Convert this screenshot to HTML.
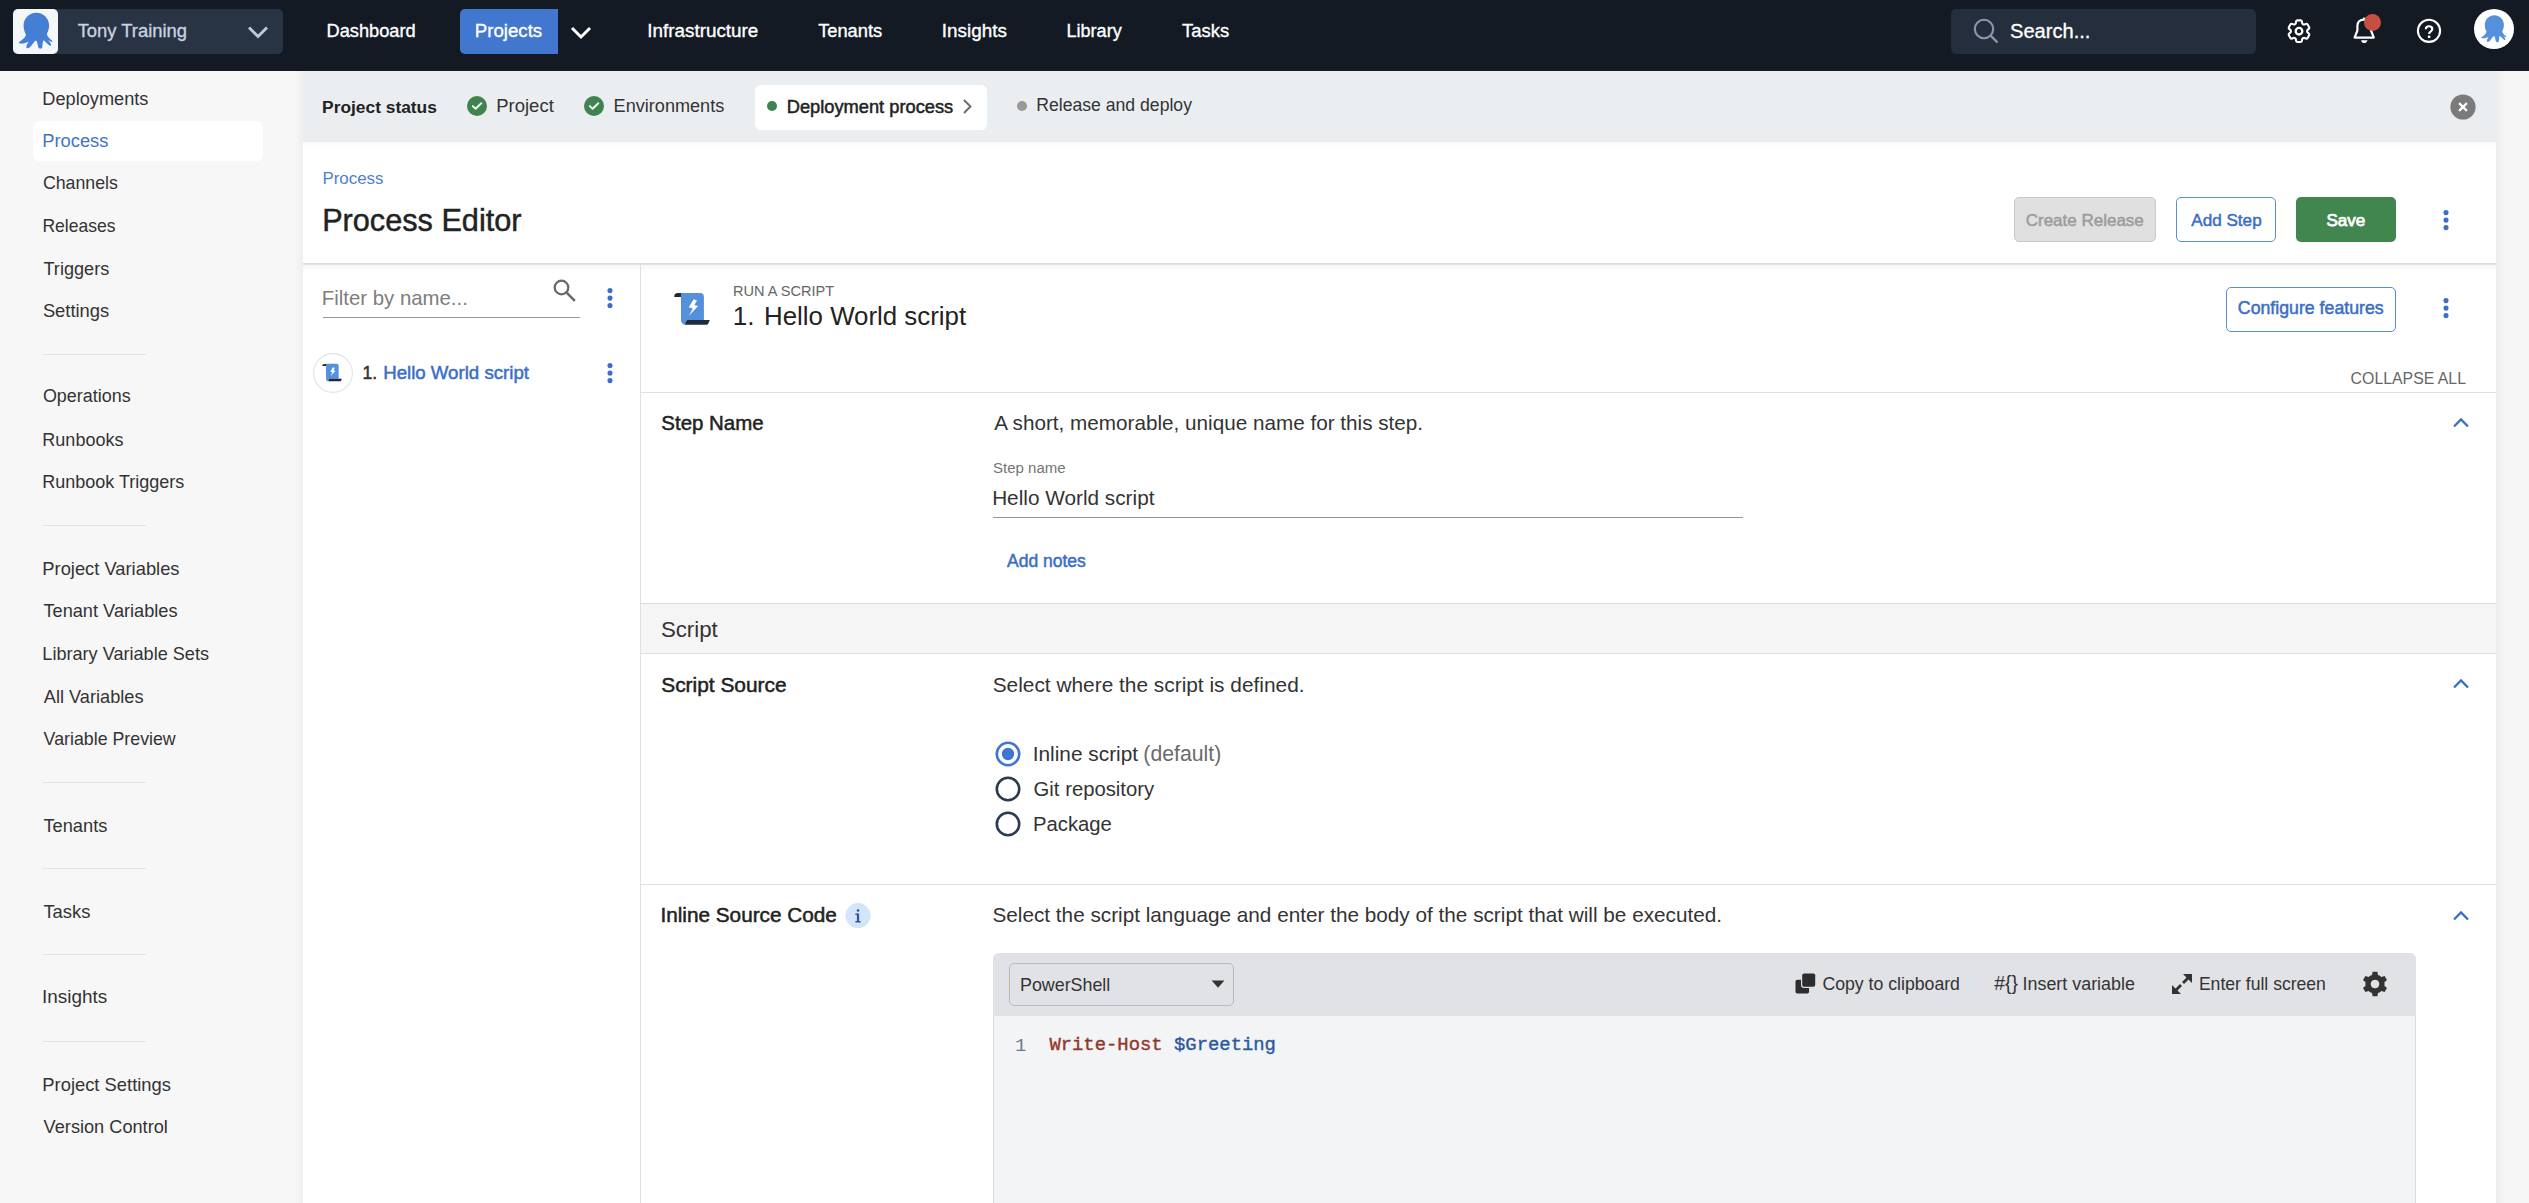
<!DOCTYPE html>
<html><head><meta charset="utf-8"><title>Process Editor</title>
<style>
html,body{margin:0;padding:0;width:2529px;height:1203px;overflow:hidden;background:#fff}
.r{position:absolute;display:block}
.t{position:absolute;white-space:pre}
.S{font-family:"Liberation Sans",sans-serif}
.M{font-family:"Liberation Mono",monospace}
</style></head><body>
<div class="r" style="left:0px;top:0px;width:2529px;height:71px;background:#131a23"></div>
<div class="r" style="left:13px;top:9px;width:270px;height:45px;background:#283344;border-radius:5px"></div>
<div class="r" style="left:13px;top:9px;width:45px;height:45px;background:#f4f6f8;border-radius:5px"></div>
<svg class="r" style="left:14px;top:10px" width="44" height="44" viewBox="0 0 44 44"><path d="M22.3 2.8C29.6 2.8 35.1 8.6 35.1 15.6C35.1 19.2 33.9 21.6 32.9 23.9C33.4 26.6 35.6 28.6 37.6 30.3C38.6 31.2 38.3 32.3 37.2 31.9C36.2 31.4 35.1 30.5 34.1 29.7C35.1 31.1 36.6 33.1 37.1 34.7C37.4 35.9 36.3 36.1 35.1 35.3C33.1 33.9 31.1 31.1 29.6 30.3C28.6 31.6 28.6 34.1 28.4 36.6C28.1 39.6 24.6 39.6 24.1 36.6C23.6 34.1 23.3 31.6 21.9 30.4C20.1 31.6 18.6 33.9 17.1 36.1C15.4 38.4 12.8 38.9 12.4 37.4C12.1 35.6 13.6 33.1 14.6 31.4C12.6 32.6 9.1 33.9 6.1 33.4C4.6 33.1 4.6 32.3 5.6 31.7C8.1 30.1 11.6 27.6 11.9 24.6C10.6 22.1 9.6 19.1 9.6 15.6C9.6 8.6 15.1 2.8 22.3 2.8Z" fill="#447fd5"/></svg>
<div class="t S" style="left:77.63px;top:22.12px;font-size:18.4px;line-height:18.4px;font-weight:400;color:#c8d2e0;-webkit-text-stroke:0.35px #c8d2e0;">Tony Training</div>
<svg class="r" style="left:240px;top:18px" width="36" height="30" viewBox="0 0 36 30"><polyline points="9,9.5 18,18.5 27,9.5" fill="none" stroke="#bfc9d7" stroke-width="2.9"/></svg>
<div class="t S" style="left:326.54px;top:22.17px;font-size:18.23px;line-height:18.23px;font-weight:400;color:#ffffff;-webkit-text-stroke:0.35px #fff;">Dashboard</div>
<div class="r" style="left:460px;top:9px;width:98px;height:45px;background:#4177cf;border-radius:5px 0 0 5px"></div>
<div class="t S" style="left:474.81px;top:21.80px;font-size:18.66px;line-height:18.66px;font-weight:400;color:#ffffff;-webkit-text-stroke:0.35px #fff;">Projects</div>
<svg class="r" style="left:563px;top:18px" width="36" height="30" viewBox="0 0 36 30"><polyline points="9,10 18,19 27,10" fill="none" stroke="#ffffff" stroke-width="2.9"/></svg>
<div class="t S" style="left:647.30px;top:21.64px;font-size:18.85px;line-height:18.85px;font-weight:400;color:#ffffff;-webkit-text-stroke:0.35px #fff;">Infrastructure</div>
<div class="t S" style="left:818.13px;top:22.12px;font-size:18.29px;line-height:18.29px;font-weight:400;color:#ffffff;-webkit-text-stroke:0.35px #fff;">Tenants</div>
<div class="t S" style="left:941.80px;top:21.61px;font-size:18.89px;line-height:18.89px;font-weight:400;color:#ffffff;-webkit-text-stroke:0.35px #fff;">Insights</div>
<div class="t S" style="left:1066.56px;top:22.32px;font-size:18.05px;line-height:18.05px;font-weight:400;color:#ffffff;-webkit-text-stroke:0.35px #fff;">Library</div>
<div class="t S" style="left:1182.03px;top:21.96px;font-size:18.48px;line-height:18.48px;font-weight:400;color:#ffffff;-webkit-text-stroke:0.35px #fff;">Tasks</div>
<div class="r" style="left:1951px;top:9px;width:305px;height:45px;background:#242e3c;border-radius:5px"></div>
<svg class="r" style="left:1970px;top:15px" width="32" height="32" viewBox="0 0 32 32"><circle cx="14" cy="14" r="9.2" fill="none" stroke="#8797b3" stroke-width="2.1"/><line x1="20.6" y1="20.6" x2="27.5" y2="27.5" stroke="#8797b3" stroke-width="2.4"/></svg>
<div class="t S" style="left:2009.99px;top:21.39px;font-size:20.1px;line-height:20.1px;font-weight:400;color:#ffffff;-webkit-text-stroke:0.3px #fff;">Search...</div>
<svg class="r" style="left:2284px;top:16px" width="30" height="30" viewBox="0 0 30 30"><g transform="translate(15,15.2) scale(1.2) translate(-12,-12)"><path d="M9.594 3.94c.09-.542.56-.94 1.11-.94h2.593c.55 0 1.02.398 1.11.94l.213 1.281c.063.374.313.686.645.87.074.04.147.083.22.127.325.196.72.257 1.075.124l1.217-.456a1.125 1.125 0 0 1 1.37.49l1.296 2.247a1.125 1.125 0 0 1-.26 1.431l-1.003.827c-.293.241-.438.613-.43.992a7.723 7.723 0 0 1 0 .255c-.008.378.137.75.43.991l1.004.827c.424.35.534.955.26 1.43l-1.298 2.247a1.125 1.125 0 0 1-1.369.491l-1.217-.456c-.355-.133-.75-.072-1.076.124a6.47 6.47 0 0 1-.22.128c-.331.183-.581.495-.644.869l-.213 1.281c-.09.543-.56.94-1.11.94h-2.594c-.55 0-1.019-.398-1.11-.94l-.213-1.281c-.062-.374-.312-.686-.644-.87a6.52 6.52 0 0 1-.22-.127c-.325-.196-.72-.257-1.076-.124l-1.217.456a1.125 1.125 0 0 1-1.369-.49l-1.297-2.247a1.125 1.125 0 0 1 .26-1.431l1.004-.827c.292-.24.437-.613.43-.991a6.932 6.932 0 0 1 0-.255c.007-.38-.138-.751-.43-.992l-1.004-.827a1.125 1.125 0 0 1-.26-1.43l1.297-2.247a1.125 1.125 0 0 1 1.37-.491l1.216.456c.356.133.751.072 1.076-.124.072-.044.146-.086.22-.128.332-.183.582-.495.644-.869l.214-1.28Z" fill="none" stroke="#fff" stroke-width="1.75" stroke-linejoin="round"/><circle cx="12" cy="12" r="2.75" fill="none" stroke="#fff" stroke-width="1.9"/></g></svg>
<svg class="r" style="left:2348px;top:11px" width="40" height="36" viewBox="0 0 40 36"><path d="M6.6 26.6 L25.8 26.6 L23 19.5 L23 15 C23 11 20.6 8.6 16.2 8.6 C11.8 8.6 9.4 11 9.4 15 L9.4 19.5 Z" fill="none" stroke="#fff" stroke-width="2.2" stroke-linejoin="round"/><line x1="16.2" y1="8.8" x2="16.2" y2="6.6" stroke="#fff" stroke-width="2.4"/><path d="M13 29.2 L19.5 29.2 C19 31.3 17.5 32 16.2 32 C15 32 13.5 31.3 13 29.2Z" fill="#fff"/><circle cx="24.5" cy="11.4" r="8.5" fill="#c5503f"/></svg>
<svg class="r" style="left:2414px;top:16px" width="30" height="30" viewBox="0 0 30 30"><circle cx="15" cy="14.8" r="11.1" fill="none" stroke="#fff" stroke-width="2.1"/><path d="M11.8 13.3 C11.8 11.3 13.2 10.3 15 10.3 C16.9 10.3 18.3 11.4 18.3 13 C18.3 15.3 15.1 15.7 15.1 17.9" fill="none" stroke="#fff" stroke-width="2.1"/><circle cx="15.1" cy="20.8" r="1.35" fill="#fff"/></svg>
<svg class="r" style="left:2474px;top:8.6px" width="40" height="40" viewBox="0 0 40 40"><circle cx="20" cy="20" r="20" fill="#fff"/><path d="M22.3 2.8C29.6 2.8 35.1 8.6 35.1 15.6C35.1 19.2 33.9 21.6 32.9 23.9C33.4 26.6 35.6 28.6 37.6 30.3C38.6 31.2 38.3 32.3 37.2 31.9C36.2 31.4 35.1 30.5 34.1 29.7C35.1 31.1 36.6 33.1 37.1 34.7C37.4 35.9 36.3 36.1 35.1 35.3C33.1 33.9 31.1 31.1 29.6 30.3C28.6 31.6 28.6 34.1 28.4 36.6C28.1 39.6 24.6 39.6 24.1 36.6C23.6 34.1 23.3 31.6 21.9 30.4C20.1 31.6 18.6 33.9 17.1 36.1C15.4 38.4 12.8 38.9 12.4 37.4C12.1 35.6 13.6 33.1 14.6 31.4C12.6 32.6 9.1 33.9 6.1 33.4C4.6 33.1 4.6 32.3 5.6 31.7C8.1 30.1 11.6 27.6 11.9 24.6C10.6 22.1 9.6 19.1 9.6 15.6C9.6 8.6 15.1 2.8 22.3 2.8Z" fill="#5590dc" transform="translate(3.6,4.2) scale(0.75)"/></svg>
<div class="r" style="left:0px;top:71px;width:303px;height:1132px;background:#f7f7f7"></div>
<div class="r" style="left:295px;top:71px;width:8px;height:1132px;background:linear-gradient(to right, rgba(0,0,0,0), rgba(0,0,0,0.035))"></div>
<div class="r" style="left:33px;top:121px;width:230px;height:40px;background:#ffffff;border-radius:6px"></div>
<div class="t S" style="left:42.35px;top:90.01px;font-size:18.18px;line-height:18.18px;font-weight:400;color:#333333;">Deployments</div>
<div class="t S" style="left:42.34px;top:132.42px;font-size:18.29px;line-height:18.29px;font-weight:400;color:#3f74cc;">Process</div>
<div class="t S" style="left:42.91px;top:175.37px;font-size:17.75px;line-height:17.75px;font-weight:400;color:#333333;">Channels</div>
<div class="t S" style="left:42.40px;top:217.76px;font-size:17.53px;line-height:17.53px;font-weight:400;color:#333333;">Releases</div>
<div class="t S" style="left:43.44px;top:259.84px;font-size:18.15px;line-height:18.15px;font-weight:400;color:#333333;">Triggers</div>
<div class="t S" style="left:42.88px;top:302.06px;font-size:18.36px;line-height:18.36px;font-weight:400;color:#333333;">Settings</div>
<div class="t S" style="left:42.90px;top:388.40px;font-size:17.96px;line-height:17.96px;font-weight:400;color:#333333;">Operations</div>
<div class="t S" style="left:42.36px;top:430.76px;font-size:18.0px;line-height:18.0px;font-weight:400;color:#333333;">Runbooks</div>
<div class="t S" style="left:42.36px;top:473.17px;font-size:17.99px;line-height:17.99px;font-weight:400;color:#333333;">Runbook Triggers</div>
<div class="t S" style="left:42.33px;top:559.78px;font-size:18.34px;line-height:18.34px;font-weight:400;color:#333333;">Project Variables</div>
<div class="t S" style="left:43.44px;top:602.29px;font-size:18.2px;line-height:18.2px;font-weight:400;color:#333333;">Tenant Variables</div>
<div class="t S" style="left:42.35px;top:645.28px;font-size:18.1px;line-height:18.1px;font-weight:400;color:#333333;">Library Variable Sets</div>
<div class="t S" style="left:43.80px;top:687.59px;font-size:18.2px;line-height:18.2px;font-weight:400;color:#333333;">All Variables</div>
<div class="t S" style="left:43.62px;top:731.14px;font-size:17.79px;line-height:17.79px;font-weight:400;color:#333333;">Variable Preview</div>
<div class="t S" style="left:43.43px;top:816.74px;font-size:18.26px;line-height:18.26px;font-weight:400;color:#333333;">Tenants</div>
<div class="t S" style="left:43.43px;top:902.72px;font-size:18.4px;line-height:18.4px;font-weight:400;color:#333333;">Tasks</div>
<div class="t S" style="left:42.10px;top:988.28px;font-size:18.92px;line-height:18.92px;font-weight:400;color:#333333;">Insights</div>
<div class="t S" style="left:42.33px;top:1075.55px;font-size:18.37px;line-height:18.37px;font-weight:400;color:#333333;">Project Settings</div>
<div class="t S" style="left:43.62px;top:1118.11px;font-size:18.18px;line-height:18.18px;font-weight:400;color:#333333;">Version Control</div>
<div class="r" style="left:43px;top:354px;width:103px;height:1px;background:#e2e2e2"></div>
<div class="r" style="left:43px;top:525px;width:103px;height:1px;background:#e2e2e2"></div>
<div class="r" style="left:43px;top:782px;width:103px;height:1px;background:#e2e2e2"></div>
<div class="r" style="left:43px;top:868px;width:103px;height:1px;background:#e2e2e2"></div>
<div class="r" style="left:43px;top:954px;width:103px;height:1px;background:#e2e2e2"></div>
<div class="r" style="left:43px;top:1041px;width:103px;height:1px;background:#e2e2e2"></div>
<div class="r" style="left:303px;top:71px;width:2193px;height:71px;background:#ebeef1"></div>
<div class="r" style="left:2496px;top:71px;width:33px;height:1132px;background:#f6f6f6"></div>
<div class="r" style="left:2496px;top:71px;width:10px;height:1132px;background:linear-gradient(to right, rgba(0,0,0,0.04), rgba(0,0,0,0))"></div>
<div class="t S" style="left:322.08px;top:99.19px;font-size:17.38px;line-height:17.38px;font-weight:700;color:#222;">Project status</div>
<svg class="r" style="left:467px;top:96px" width="20" height="20" viewBox="0 0 20 20"><circle cx="10" cy="10" r="10" fill="#40834f"/><polyline points="5.8,10.1 8.6,12.8 14.3,7.2" fill="none" stroke="#f4f5f7" stroke-width="1.9" stroke-linecap="round" stroke-linejoin="round"/></svg>
<div class="t S" style="left:496.22px;top:96.73px;font-size:18.51px;line-height:18.51px;font-weight:400;color:#333333;">Project</div>
<svg class="r" style="left:584px;top:96px" width="20" height="20" viewBox="0 0 20 20"><circle cx="10" cy="10" r="10" fill="#40834f"/><polyline points="5.8,10.1 8.6,12.8 14.3,7.2" fill="none" stroke="#f4f5f7" stroke-width="1.9" stroke-linecap="round" stroke-linejoin="round"/></svg>
<div class="t S" style="left:613.55px;top:97.06px;font-size:18.12px;line-height:18.12px;font-weight:400;color:#333333;">Environments</div>
<div class="r" style="left:755px;top:85px;width:232px;height:45px;background:#fff;border-radius:6px"></div>
<svg class="r" style="left:767px;top:101px" width="10" height="10" viewBox="0 0 10 10"><circle cx="5" cy="5" r="5" fill="#40834f"/></svg>
<div class="t S" style="left:786.69px;top:98.43px;font-size:18.28px;line-height:18.28px;font-weight:400;color:#222;-webkit-text-stroke:0.5px #222;">Deployment process</div>
<svg class="r" style="left:958px;top:96px" width="20" height="20" viewBox="0 0 20 20"><polyline points="6,4 12.5,10.5 6,17" fill="none" stroke="#666" stroke-width="1.8"/></svg>
<svg class="r" style="left:1017px;top:101px" width="10" height="10" viewBox="0 0 10 10"><circle cx="5" cy="5" r="5" fill="#999"/></svg>
<div class="t S" style="left:1036.29px;top:97.49px;font-size:17.61px;line-height:17.61px;font-weight:400;color:#333333;">Release and deploy</div>
<svg class="r" style="left:2450px;top:93.5px" width="26" height="26" viewBox="0 0 26 26"><circle cx="13" cy="13" r="12.6" fill="#7b7b7b"/><path d="M9.1 9.1 L16.9 16.9 M16.9 9.1 L9.1 16.9" stroke="#fff" stroke-width="2.2"/></svg>
<div class="r" style="left:303px;top:142px;width:2193px;height:121px;background:#fff"></div>
<div class="r" style="left:303px;top:142px;width:2193px;height:5px;background:linear-gradient(rgba(0,0,0,0.015), rgba(0,0,0,0))"></div>
<div class="t S" style="left:322.45px;top:171.49px;font-size:16.91px;line-height:16.91px;font-weight:400;color:#4d7fd1;">Process</div>
<div class="t S" style="left:322.15px;top:204.84px;font-size:30.67px;line-height:30.67px;font-weight:400;color:#222;-webkit-text-stroke:0.45px #222;">Process Editor</div>
<div class="r" style="left:2014px;top:197px;width:142px;height:45px;background:#e0e0e0;border:1px solid #c9c9c9;border-radius:5px;box-sizing:border-box"></div>
<div class="t S" style="left:2025.70px;top:211.61px;font-size:17.0px;line-height:17.0px;font-weight:400;color:#9c9c9c;-webkit-text-stroke:0.5px #9c9c9c;">Create Release</div>
<div class="r" style="left:2176px;top:197px;width:100px;height:45px;background:#fff;border:1.3px solid #5b8cdb;border-radius:5px;box-sizing:border-box"></div>
<div class="t S" style="left:2191.25px;top:211.50px;font-size:17.13px;line-height:17.13px;font-weight:400;color:#3b6ec6;-webkit-text-stroke:0.5px #3b6ec6;">Add Step</div>
<div class="r" style="left:2296px;top:197px;width:100px;height:45px;background:#42864f;border-radius:5px"></div>
<div class="t S" style="left:2326.45px;top:211.58px;font-size:17.03px;line-height:17.03px;font-weight:400;color:#fff;-webkit-text-stroke:0.75px #fff;">Save</div>
<svg class="r" style="left:2441px;top:208.4px" width="10" height="25" viewBox="0 0 10 25"><circle cx="5" cy="4.6" r="2.55" fill="#3b6ec6"/><circle cx="5" cy="12.1" r="2.55" fill="#3b6ec6"/><circle cx="5" cy="19.6" r="2.55" fill="#3b6ec6"/></svg>
<div class="r" style="left:303px;top:263px;width:2193px;height:2px;background:linear-gradient(#d9d9d9,#e4e4e4)"></div>
<div class="r" style="left:303px;top:265px;width:2193px;height:8px;background:linear-gradient(rgba(0,0,0,0.035), rgba(0,0,0,0))"></div>
<div class="r" style="left:303px;top:265px;width:337px;height:938px;background:#fff"></div>
<div class="r" style="left:303px;top:265px;width:337px;height:8px;background:linear-gradient(rgba(0,0,0,0.03), rgba(0,0,0,0))"></div>
<div class="r" style="left:640px;top:263px;width:1px;height:940px;background:#e0e0e0"></div>
<div class="t S" style="left:321.87px;top:288.17px;font-size:20.36px;line-height:20.36px;font-weight:400;color:#7d7d7d;">Filter by name...</div>
<div class="r" style="left:323px;top:317px;width:257px;height:1px;background:#9a9a9a"></div>
<svg class="r" style="left:550px;top:276px" width="30" height="30" viewBox="0 0 30 30"><circle cx="11.5" cy="11.5" r="6.8" fill="none" stroke="#6a6a6a" stroke-width="2.3"/><line x1="16.4" y1="16.4" x2="24.8" y2="24.8" stroke="#6a6a6a" stroke-width="2.6"/></svg>
<svg class="r" style="left:605px;top:285.6px" width="10" height="25" viewBox="0 0 10 25"><circle cx="5" cy="4.6" r="2.55" fill="#3b6ec6"/><circle cx="5" cy="12.1" r="2.55" fill="#3b6ec6"/><circle cx="5" cy="19.6" r="2.55" fill="#3b6ec6"/></svg>
<svg class="r" style="left:313px;top:353px" width="40" height="40" viewBox="0 0 40 40"><circle cx="20" cy="20" r="19.4" fill="#fff" stroke="#e2e2e2" stroke-width="1.1"/></svg>
<svg class="r" style="left:320px;top:363px" width="25" height="22" viewBox="0 0 25 22"><g transform='scale(0.55) translate(-5,-6.5)'><path d='M9.2 11.9 C9.2 9.8 10.6 8.1 12.6 8.1 L16.2 8.1 L16.2 11.9 Z' fill='#1f2b3c'/><path d='M16 8 L35.5 8 C37.5 8 38.9 9.5 38.9 11.5 L38.9 35 L21 35 L21 39.8 C18.2 39.8 16 37.8 16 35 Z' fill='#5590dc'/><path d='M21.5 35 L44.8 35 L43.3 38.6 C43 39.3 42.6 39.7 41.8 39.7 L20.2 39.7 Z' fill='#1f2b3c'/><path d='M28.7 14.3 L32 15.6 L29.4 19.9 L33.1 21.1 L24 30.7 L27.8 23.4 L23.7 22.3 Z' fill='#fff'/></g></svg>
<div class="t S" style="left:362.54px;top:364.50px;font-size:17.6px;line-height:17.6px;font-weight:400;color:#333;-webkit-text-stroke:0.5px #333;">1.</div>
<div class="t S" style="left:383.16px;top:363.60px;font-size:18.67px;line-height:18.67px;font-weight:400;color:#3b6ec6;-webkit-text-stroke:0.5px #3b6ec6;">Hello World script</div>
<svg class="r" style="left:605px;top:360.6px" width="10" height="25" viewBox="0 0 10 25"><circle cx="5" cy="4.6" r="2.55" fill="#3b6ec6"/><circle cx="5" cy="12.1" r="2.55" fill="#3b6ec6"/><circle cx="5" cy="19.6" r="2.55" fill="#3b6ec6"/></svg>
<div class="r" style="left:641px;top:265px;width:1855px;height:938px;background:#fff"></div>
<div class="r" style="left:641px;top:265px;width:1855px;height:8px;background:linear-gradient(rgba(0,0,0,0.03), rgba(0,0,0,0))"></div>
<svg class="r" style="left:665px;top:285px" width="55" height="47" viewBox="0 0 55 47"><path d='M9.2 11.9 C9.2 9.8 10.6 8.1 12.6 8.1 L16.2 8.1 L16.2 11.9 Z' fill='#1f2b3c'/><path d='M16 8 L35.5 8 C37.5 8 38.9 9.5 38.9 11.5 L38.9 35 L21 35 L21 39.8 C18.2 39.8 16 37.8 16 35 Z' fill='#5590dc'/><path d='M21.5 35 L44.8 35 L43.3 38.6 C43 39.3 42.6 39.7 41.8 39.7 L20.2 39.7 Z' fill='#1f2b3c'/><path d='M28.7 14.3 L32 15.6 L29.4 19.9 L33.1 21.1 L24 30.7 L27.8 23.4 L23.7 22.3 Z' fill='#fff'/></svg>
<div class="t S" style="left:733.04px;top:284.08px;font-size:14.55px;line-height:14.55px;font-weight:400;color:#666;">RUN A SCRIPT</div>
<div class="t S" style="left:764.03px;top:303.50px;font-size:25.87px;line-height:25.87px;font-weight:400;color:#222;">Hello World script</div>
<div class="t S" style="left:732.72px;top:303.39px;font-size:26.0px;line-height:26.0px;font-weight:400;color:#222;">1.</div>
<div class="r" style="left:2226px;top:287px;width:170px;height:45px;background:#fff;border:1.3px solid #5b8cdb;border-radius:5px;box-sizing:border-box"></div>
<div class="t S" style="left:2237.86px;top:300.19px;font-size:17.73px;line-height:17.73px;font-weight:400;color:#3b6ec6;-webkit-text-stroke:0.5px #3b6ec6;">Configure features</div>
<svg class="r" style="left:2441px;top:296.2px" width="10" height="25" viewBox="0 0 10 25"><circle cx="5" cy="4.6" r="2.55" fill="#3b6ec6"/><circle cx="5" cy="12.1" r="2.55" fill="#3b6ec6"/><circle cx="5" cy="19.6" r="2.55" fill="#3b6ec6"/></svg>
<div class="t S" style="left:2350.61px;top:371.18px;font-size:15.85px;line-height:15.85px;font-weight:400;color:#666;">COLLAPSE ALL</div>
<div class="r" style="left:641px;top:392px;width:1855px;height:1px;background:#e0e0e0"></div>
<div class="t S" style="left:661.33px;top:413.27px;font-size:20.47px;line-height:20.47px;font-weight:400;color:#222;-webkit-text-stroke:0.5px #222;">Step Name</div>
<div class="t S" style="left:994.20px;top:413.09px;font-size:20.69px;line-height:20.69px;font-weight:400;color:#333333;">A short, memorable, unique name for this step.</div>
<svg class="r" style="left:2452px;top:416.5px" width="18" height="12" viewBox="0 0 18 12"><polyline points="2,9.5 9,2.5 16,9.5" fill="none" stroke="#3b6ec6" stroke-width="2.3"/></svg>
<div class="t S" style="left:993.05px;top:460.09px;font-size:15.02px;line-height:15.02px;font-weight:400;color:#757575;">Step name</div>
<div class="t S" style="left:992.14px;top:488.31px;font-size:20.78px;line-height:20.78px;font-weight:400;color:#333333;">Hello World script</div>
<div class="r" style="left:993px;top:517px;width:750px;height:1px;background:#959595"></div>
<div class="t S" style="left:1006.95px;top:552.55px;font-size:17.54px;line-height:17.54px;font-weight:400;color:#3b6ec6;-webkit-text-stroke:0.5px #3b6ec6;">Add notes</div>
<div class="r" style="left:641px;top:603px;width:1855px;height:1px;background:#dedede"></div>
<div class="r" style="left:641px;top:604px;width:1855px;height:49px;background:#f5f5f5"></div>
<div class="t S" style="left:660.89px;top:619.07px;font-size:22.24px;line-height:22.24px;font-weight:400;color:#333333;">Script</div>
<div class="r" style="left:641px;top:653px;width:1855px;height:1px;background:#e0e0e0"></div>
<div class="t S" style="left:661.21px;top:674.51px;font-size:20.9px;line-height:20.9px;font-weight:400;color:#222;-webkit-text-stroke:0.5px #222;">Script Source</div>
<div class="t S" style="left:992.66px;top:674.54px;font-size:20.86px;line-height:20.86px;font-weight:400;color:#333333;">Select where the script is defined.</div>
<svg class="r" style="left:2452px;top:677.8px" width="18" height="12" viewBox="0 0 18 12"><polyline points="2,9.5 9,2.5 16,9.5" fill="none" stroke="#3b6ec6" stroke-width="2.3"/></svg>
<svg class="r" style="left:993px;top:739px" width="30" height="30" viewBox="0 0 30 30"><circle cx="15" cy="15" r="11.2" fill="none" stroke="#4176cf" stroke-width="2.6"/><circle cx="15" cy="15" r="6.2" fill="#4176cf"/></svg>
<div class="t S" style="left:1032.72px;top:743.55px;font-size:20.85px;line-height:20.85px;font-weight:400;color:#333333;">Inline script</div>
<div class="t S" style="left:1143.33px;top:743.82px;font-size:21.24px;line-height:21.24px;font-weight:400;color:#6b6b6b;">(default)</div>
<svg class="r" style="left:993px;top:774px" width="30" height="30" viewBox="0 0 30 30"><circle cx="15" cy="15" r="11.2" fill="none" stroke="#2b3a4e" stroke-width="2.6"/></svg>
<div class="t S" style="left:1033.59px;top:778.72px;font-size:20.29px;line-height:20.29px;font-weight:400;color:#333333;">Git repository</div>
<svg class="r" style="left:993px;top:809px" width="30" height="30" viewBox="0 0 30 30"><circle cx="15" cy="15" r="11.2" fill="none" stroke="#2b3a4e" stroke-width="2.6"/></svg>
<div class="t S" style="left:1032.98px;top:814.04px;font-size:20.27px;line-height:20.27px;font-weight:400;color:#333333;">Package</div>
<div class="r" style="left:641px;top:884px;width:1855px;height:1px;background:#e0e0e0"></div>
<div class="t S" style="left:660.38px;top:905.23px;font-size:20.76px;line-height:20.76px;font-weight:400;color:#222;-webkit-text-stroke:0.5px #222;">Inline Source Code</div>
<svg class="r" style="left:844.5px;top:903px" width="26" height="26" viewBox="0 0 26 26"><circle cx="13" cy="12.6" r="12.5" fill="#d3e5fa"/><circle cx="13" cy="7.4" r="1.25" fill="#2d5597"/><path d="M10.4 10.5 L14.1 10.5 L14.1 17.9 L15.6 17.9 L15.6 19.5 L10.4 19.5 L10.4 17.9 L11.9 17.9 L11.9 12 L10.4 12 Z" fill="#2d5597"/></svg>
<div class="t S" style="left:992.46px;top:905.24px;font-size:20.74px;line-height:20.74px;font-weight:400;color:#333333;">Select the script language and enter the body of the script that will be executed.</div>
<svg class="r" style="left:2452px;top:910px" width="18" height="12" viewBox="0 0 18 12"><polyline points="2,9.5 9,2.5 16,9.5" fill="none" stroke="#3b6ec6" stroke-width="2.3"/></svg>
<div class="r" style="left:993px;top:953px;width:1423px;height:63px;background:#e1e2e6;border-radius:6px 6px 0 0"></div>
<div class="r" style="left:993px;top:1016px;width:1423px;height:187px;background:#f3f4f6;border-left:1px solid #dadbdf;border-right:1px solid #dadbdf;box-sizing:border-box"></div>
<div class="r" style="left:1009px;top:963px;width:225px;height:43px;border:1px solid #b9babe;border-radius:5px;box-sizing:border-box"></div>
<div class="t S" style="left:1019.97px;top:976.78px;font-size:17.86px;line-height:17.86px;font-weight:400;color:#333333;">PowerShell</div>
<svg class="r" style="left:1208px;top:976px" width="20" height="16" viewBox="0 0 20 16"><polygon points="3.7,4.5 16.4,4.5 10,11.8" fill="#333"/></svg>
<svg class="r" style="left:1792px;top:970px" width="28" height="28" viewBox="0 0 28 28"><rect x="3.5" y="9.8" width="13.6" height="13.7" rx="1.8" fill="#2d2d2d"/><rect x="10.2" y="3.4" width="13" height="13.4" rx="1.8" fill="#2d2d2d" stroke="#e1e2e6" stroke-width="2.4" paint-order="stroke"/></svg>
<div class="t S" style="left:1822.42px;top:975.63px;font-size:17.68px;line-height:17.68px;font-weight:400;color:#333333;">Copy to clipboard</div>
<div class="t S" style="left:1994.30px;top:974.36px;font-size:19.42px;line-height:19.42px;font-weight:400;color:#333333;">#{}</div>
<div class="t S" style="left:2022.59px;top:975.86px;font-size:17.89px;line-height:17.89px;font-weight:400;color:#333333;">Insert variable</div>
<svg class="r" style="left:2168px;top:970px" width="28" height="28" viewBox="0 0 28 28"><path d="M15 4 L24 4 L24 13 L20.5 9.5 L16 14 L14 12 L18.5 7.5 Z M13 24 L4 24 L4 15 L7.5 18.5 L12 14 L14 16 L9.5 20.5 Z" fill="#333"/></svg>
<div class="t S" style="left:2198.89px;top:975.72px;font-size:17.58px;line-height:17.58px;font-weight:400;color:#333333;">Enter full screen</div>
<svg class="r" style="left:2360px;top:969px" width="30" height="30" viewBox="0 0 30 30"><g transform="translate(15,15)"><path d="M-2.4 -12.3 L2.4 -12.3 L3 -8.9 A9.3 9.3 0 0 1 6.4 -7 L9.6 -8.1 L12 -4 L9.4 -1.8 A9.3 9.3 0 0 1 9.4 1.8 L12 4 L9.6 8.1 L6.4 7 A9.3 9.3 0 0 1 3 8.9 L2.4 12.3 L-2.4 12.3 L-3 8.9 A9.3 9.3 0 0 1 -6.4 7 L-9.6 8.1 L-12 4 L-9.4 1.8 A9.3 9.3 0 0 1 -9.4 -1.8 L-12 -4 L-9.6 -8.1 L-6.4 -7 A9.3 9.3 0 0 1 -3 -8.9 Z M0 -4.3 A4.3 4.3 0 1 0 0.01 -4.3 Z" fill="#333" fill-rule="evenodd"/></g></svg>
<div class="t M" style="left:1014.98px;top:1036.71px;font-size:18.9px;line-height:18.9px;font-weight:400;color:#6e7a89;">1</div>
<div class="t M" style="left:1049.40px;top:1036.32px;font-size:18.89px;line-height:18.89px;font-weight:400;color:#93372a;-webkit-text-stroke:0.4px #93372a;">Write-Host <span style="color:#2c5a9f;-webkit-text-stroke:0.4px #2c5a9f">$Greeting</span></div>
</body></html>
